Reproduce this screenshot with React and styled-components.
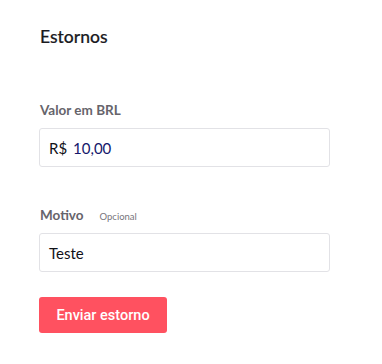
import React from 'react';
import styled, { createGlobalStyle } from 'styled-components';

const GlobalStyle = createGlobalStyle`
  body {
    margin: 0;
    background: #ffffff;
    font-family: Lato, "Open Sans", sans-serif;
  }
`;

const Page = styled.div`
  padding: 27px 0 0 39px;
  width: 291px;
  display: flex;
  flex-direction: column;
`;

const Title = styled.h2`
  margin: 0 0 0 1px;
  font-size: 17.5px;
  line-height: 20px;
  font-weight: 500;
  color: #1b1b1f;
  -webkit-text-stroke: 0.2px #1b1b1f;
`;

const Field = styled.div`
  display: flex;
  flex-direction: column;
  margin-top: ${p => p.$top}px;
`;

const LabelRow = styled.div`
  display: flex;
  align-items: baseline;
  gap: 16px;
  margin: 0 0 10px 1px;
`;

const Label = styled.label`
  font-size: 13.5px;
  line-height: 16px;
  font-weight: 700;
  color: #66646b;
`;

const Hint = styled.span`
  font-size: 9.5px;
  color: #77757c;
`;

const InputBox = styled.div`
  height: 39px;
  box-sizing: border-box;
  border: 1px solid #e2e2e6;
  border-radius: 3px;
  display: flex;
  align-items: center;
  padding: 0 9px;
  font-size: 15px;
  color: #111118;
`;

const Prefix = styled.span`
  margin-right: 6px;
  color: #111118;
`;

const Value = styled.span`
  color: ${p => p.$accent ? '#14176b' : '#111118'};
`;

const Button = styled.button`
  margin-top: 25px;
  align-self: flex-start;
  width: 128px;
  height: 36px;
  border: none;
  border-radius: 3px;
  background: #ff5160;
  color: #ffffff;
  font-family: Roboto, "Open Sans", sans-serif;
  font-size: 14.5px;
  font-weight: 500;
  cursor: pointer;
`;

export default function App() {
  return (
    <>
      <GlobalStyle />
      <Page>
        <Title>Estornos</Title>
        <Field $top={55}>
          <LabelRow>
            <Label>Valor em BRL</Label>
          </LabelRow>
          <InputBox>
            <Prefix>R$</Prefix>
            <Value $accent>10,00</Value>
          </InputBox>
        </Field>
        <Field $top={40}>
          <LabelRow>
            <Label>Motivo</Label>
            <Hint>Opcional</Hint>
          </LabelRow>
          <InputBox>
            <Value>Teste</Value>
          </InputBox>
        </Field>
        <Button>Enviar estorno</Button>
      </Page>
    </>
  );
}
